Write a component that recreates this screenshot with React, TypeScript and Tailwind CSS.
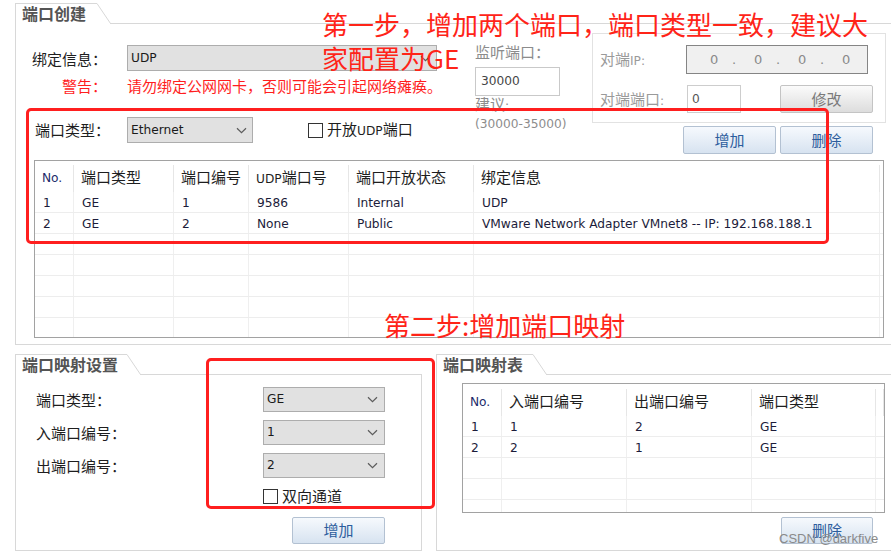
import React from "react";

function Chevron() {
  return (
    <svg width="11" height="7" viewBox="0 0 11 7" className="shrink-0">
      <path d="M1 1.2 L5.5 5.6 L10 1.2" fill="none" stroke="#5c5c5c" strokeWidth="1.2" />
    </svg>
  );
}

function Select({ value, className }: { value: string; className: string }) {
  return (
    <div
      className={
        "flex shrink-0 items-center justify-between border border-[#adadad] bg-[#e1e1e1] pl-[3px] pr-[5px] text-[12.2px] text-[#1a1a1a] " +
        className
      }
    >
      <span>{value}</span>
      <Chevron />
    </div>
  );
}

function Btn({ label, blue, className }: { label: string; blue?: boolean; className: string }) {
  return (
    <div
      className={
        "flex shrink-0 items-center justify-center rounded-[2px] border pt-[2px] text-[15px] " +
        (blue
          ? "border-[#b3c1d2] bg-linear-to-b from-[#f6f9fd] to-[#d7e3f0] text-[#2c5d9d] "
          : "border-[#c4c4c4] bg-linear-to-b from-[#fbfbfb] to-[#dddddd] text-[#7a7a7a] ") +
        className
      }
    >
      {label}
    </div>
  );
}

function Check() {
  return <div className="h-[15px] w-[15px] shrink-0 border border-[#333333] bg-white" />;
}

function L({ children }: { children: React.ReactNode }) {
  return <span className="text-[12.2px]">{children}</span>;
}

function TabPanel({
  title,
  tabClass,
  className,
  children,
}: {
  title: string;
  tabClass: string;
  className: string;
  children: React.ReactNode;
}) {
  return (
    <div className={"flex shrink-0 flex-col " + className}>
      <div className="flex h-[21px] shrink-0">
        <div
          className={
            "shrink-0 border-l border-t border-[#d8d8d8] pl-[6px] pt-[2px] text-[16px] font-bold leading-[18px] text-[#545454] " +
            tabClass
          }
        >
          {title}
        </div>
        <svg width="14" height="21" viewBox="0 0 14 21" className="shrink-0">
          <path d="M0 0.5 L13.5 20.5" stroke="#d8d8d8" strokeWidth="1" fill="none" />
          <path d="M13 20.5 L14 20.5" stroke="#d8d8d8" strokeWidth="1" />
        </svg>
        <div className="flex-1 border-b border-[#d8d8d8]" />
      </div>
      <div className="flex flex-1 flex-col border-b border-l border-r border-[#d8d8d8]">{children}</div>
    </div>
  );
}

type Cell = React.ReactNode;

function Table({
  cols,
  header,
  rows,
  nRows,
  headerClass,
  className,
}: {
  cols: string;
  header: Cell[];
  rows: Cell[][];
  nRows: number;
  headerClass: string;
  className: string;
}) {
  const n = header.length;
  return (
    <div className={"shrink-0 overflow-hidden border border-[#a2a2a2] bg-white " + className}>
      <div className={"grid " + cols + " " + headerClass}>
        {header.map((h, i) => (
          <div
            key={i}
            className={
              "flex items-center border-r border-[#e6e6e6] pl-[7px] text-[15px] " +
              (i === 0 ? "text-[#1d2b6b]" : "text-[#1e1e1e]")
            }
          >
            {h}
          </div>
        ))}
      </div>
      {Array.from({ length: nRows }).map((_, r) => (
        <div key={r} className={"grid h-[21px] border-b border-[#ededed] " + cols}>
          {Array.from({ length: n }).map((__, c) => (
            <div
              key={c}
              className="flex items-center overflow-hidden whitespace-nowrap border-r border-[#efefef] pl-[8px] pt-[3px] text-[12.2px] text-[#1c1c3a]"
            >
              {rows[r] ? rows[r][c] : null}
            </div>
          ))}
        </div>
      ))}
    </div>
  );
}

export default function App() {
  return (
    <div className="relative h-[553px] w-[891px] overflow-hidden bg-white pl-[15px] pt-[3px] font-['DejaVu_Sans','Noto_Sans_CJK_SC',sans-serif] text-[15px] text-[#1e1e1e]">
      {/* Top panel */}
      <TabPanel title="端口创建" tabClass="w-[82px]" className="h-[342px] w-[882px]">
        <div className="flex h-[130px] shrink-0">
          {/* left column */}
          <div className="flex w-[459px] shrink-0 flex-col">
            <div className="mt-[21px] flex h-[26px] items-center">
              <div className="w-[111px] shrink-0 pl-[16px] pt-[4px]">绑定信息：</div>
              <Select value="UDP" className="h-[26px] w-[310px]" />
            </div>
            <div className="mt-[5px] flex h-[20px] items-center text-[#ff1e1e]">
              <div className="w-[111px] shrink-0 pl-[46px] pt-[2px]">警告：</div>
              <div className="pt-[2px]">请勿绑定公网网卡，否则可能会引起网络瘫痪。</div>
            </div>
            <div className="mt-[21px] flex h-[26px] items-center">
              <div className="w-[111px] shrink-0 pl-[19px] pt-[2px]">端口类型：</div>
              <Select value="Ethernet" className="h-[26px] w-[126px]" />
              <div className="ml-[55px]">
                <Check />
              </div>
              <div className="ml-[4px] pt-[1px]">
                开放<L>UDP</L>端口
              </div>
            </div>
          </div>
          {/* middle column */}
          <div className="flex w-[117px] shrink-0 flex-col text-[#8c8c8c]">
            <div className="mt-[19px] h-[20px] leading-[20px]">监听端口：</div>
            <div className="mt-[4px] flex h-[29px] w-[85px] items-center border border-[#c9c9c9] bg-white pl-[5px] text-[12.2px] text-[#444444]">
              30000
            </div>
            <div className="mt-[0px] leading-[18px]">
              <div>
                建议<L>:</L>
              </div>
              <div className="text-[12.2px]">(30000-35000)</div>
            </div>
          </div>
          {/* right column */}
          <div className="flex w-[294px] shrink-0 flex-col">
            <div className="mt-[9px] flex h-[90px] flex-col border border-[#e2e2e2] text-[#9a9a9a]">
              <div className="mt-[11px] flex h-[29px] items-center">
                <div className="w-[93px] shrink-0 pl-[7px] pt-[2px]">
                  对端<L>IP:</L>
                </div>
                <div className="flex h-[29px] w-[182px] shrink-0 items-center border border-[#858585] bg-[#f0f0f0] pl-[23px] text-[13px] text-[#8a8a8a]">
                  <span className="w-[22px]">0</span>
                  <span className="w-[22px]">.</span>
                  <span className="w-[22px]">0</span>
                  <span className="w-[22px]">.</span>
                  <span className="w-[22px]">0</span>
                  <span className="w-[22px]">.</span>
                  <span className="w-[22px]">0</span>
                </div>
              </div>
              <div className="mt-[11px] flex h-[28px] items-center">
                <div className="w-[94px] shrink-0 pl-[7px] pt-[2px]">
                  对端端口<L>:</L>
                </div>
                <div className="flex h-[28px] w-[54px] shrink-0 items-center border border-[#cdcdcd] bg-white pl-[4px] text-[12.2px] text-[#555555]">
                  0
                </div>
                <Btn label="修改" className="ml-[39px] h-[28px] w-[93px]" />
              </div>
            </div>
            <div className="mt-[3px] flex h-[28px]">
              <Btn label="增加" blue className="ml-[91px] h-[28px] w-[93px]" />
              <Btn label="删除" blue className="ml-[4px] h-[28px] w-[93px]" />
            </div>
          </div>
        </div>
        <Table
          className="ml-[18px] mt-[6px] h-[178px] w-[850px]"
          cols="grid-cols-[39px_100px_75px_100px_125px_406px_3px]"
          headerClass="h-[31px] pt-[4px]"
          header={[
            <span className="text-[12.2px]">No.</span>,
            "端口类型",
            "端口编号",
            <span>
              <L>UDP</L>端口号
            </span>,
            "端口开放状态",
            "绑定信息",
            "",
          ]}
          rows={[
            ["1", "GE", "1", "9586", "Internal", "UDP", ""],
            ["2", "GE", "2", "None", "Public", "VMware Network Adapter VMnet8 -- IP: 192.168.188.1", ""],
          ]}
          nRows={7}
        />
      </TabPanel>

      {/* Bottom panels */}
      <div className="mt-[9px] flex">
        <TabPanel title="端口映射设置" tabClass="w-[112px]" className="h-[197px] w-[407px]">
          <div className="mt-[12px] flex h-[25px] items-center">
            <div className="w-[247px] shrink-0 pl-[20px] pt-[3px]">端口类型：</div>
            <Select value="GE" className="h-[25px] w-[122px] pr-[6px]" />
          </div>
          <div className="mt-[8px] flex h-[25px] items-center">
            <div className="w-[247px] shrink-0 pl-[20px] pt-[3px]">入端口编号：</div>
            <Select value="1" className="h-[25px] w-[122px] pr-[6px]" />
          </div>
          <div className="mt-[8px] flex h-[25px] items-center">
            <div className="w-[247px] shrink-0 pl-[20px] pt-[3px]">出端口编号：</div>
            <Select value="2" className="h-[25px] w-[122px] pr-[6px]" />
          </div>
          <div className="mt-[11px] flex h-[15px] items-center pl-[247px]">
            <Check />
            <div className="ml-[4px] pt-[2px] leading-[15px]">双向通道</div>
          </div>
          <Btn label="增加" blue className="ml-[276px] mt-[13px] h-[27px] w-[93px]" />
        </TabPanel>

        <TabPanel title="端口映射表" tabClass="w-[97px]" className="ml-[14px] h-[197px] w-[460px]">
          <Table
            className="ml-[25px] mt-[8px] h-[130px] w-[423px]"
            cols="grid-cols-[39px_125px_125px_124px_8px]"
            headerClass="h-[32px] pt-[5px]"
            header={[<span className="text-[12.2px]">No.</span>, "入端口编号", "出端口编号", "端口类型", ""]}
            rows={[
              ["1", "1", "2", "GE", ""],
              ["2", "2", "1", "GE", ""],
            ]}
            nRows={5}
          />
          <Btn label="删除" blue className="ml-[344px] mt-[4px] h-[27px] w-[92px]" />
        </TabPanel>
      </div>

      {/* Annotations (overlay) */}
      <div className="pointer-events-none absolute left-[26px] top-[108px] h-[136px] w-[803px] rounded-[5px] border-[3px] border-[#ff1f1f]" />
      <div className="pointer-events-none absolute left-[206px] top-[358px] h-[151px] w-[229px] rounded-[5px] border-[3px] border-[#ff1f1f]" />
      <div className="pointer-events-none absolute left-[322px] top-[7px] font-['Noto_Sans_CJK_SC',sans-serif] text-[26px] leading-[34px] text-[#ff2418]">
        第一步，增加两个端口，端口类型一致，建议大
        <br />
        家配置为GE
      </div>
      <div className="pointer-events-none absolute left-[384px] top-[308px] font-['Noto_Sans_CJK_SC',sans-serif] text-[26px] leading-[34px] text-[#ff2418]">
        第二步:增加端口映射
      </div>
      <div className="pointer-events-none absolute left-[779px] top-[531px] font-['Liberation_Sans',sans-serif] text-[13px] leading-[15px] text-[#8a8a8a]">
        CSDN @darkfive
      </div>
    </div>
  );
}
